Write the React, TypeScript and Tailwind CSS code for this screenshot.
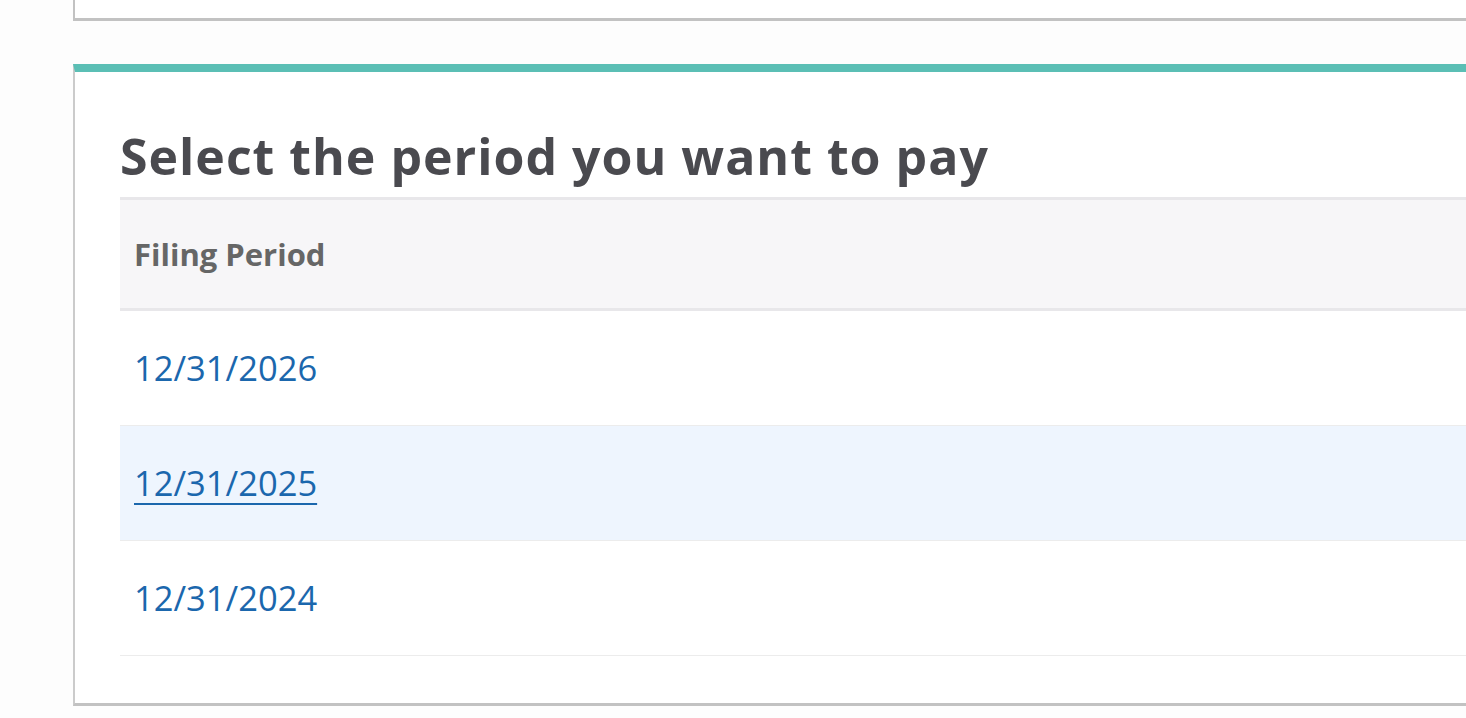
import React from "react";

const rows = ["12/31/2026", "12/31/2025", "12/31/2024"];

export default function App() {
  return (
    <div className="w-[1466px] h-[718px] overflow-hidden bg-[#fdfdfd]">
      {/* top card remainder */}
      <div className="ml-[73px] w-[1500px] h-[21px] bg-white border-l-2 border-b-[3px] border-[#c2c2c2]" />
      {/* main card */}
      <div className="mt-[43px] ml-[73px] w-[1500px] h-[642px] bg-white border-t-8 border-t-[#5bbfb5] border-l-2 border-b-[3px] border-l-[#cbcbcb] border-b-[#c2c2c2]">
        <div className="pl-[45px] pt-[52px]">
          <h1
            className="text-[#4a4a4f] text-[50px] font-bold leading-[64px] tracking-[1px]"
            style={{ fontFamily: "'Open Sans', 'Noto Sans', sans-serif" }}
          >
            Select the period you want to pay
          </h1>
          <div
            className="mt-[9px]"
            style={{ fontFamily: "'Open Sans', 'Noto Sans', sans-serif" }}
          >
            <div className="h-[114px] bg-[#f7f6f8] border-t-[3px] border-b-[3px] border-[#e8e7ea] flex items-center pl-[14px]">
              <span className="text-[#666666] text-[31px] font-bold">Filing Period</span>
            </div>
            {rows.map((d, i) => (
              <div
                key={d}
                className={
                  i === 1
                    ? "h-[115px] flex items-center pl-[14px] border-b border-[#ececec] bg-[#eef5fe]"
                    : "h-[115px] flex items-center pl-[14px] border-b border-[#ececec]"
                }
              >
                <span
                  className={
                    i === 1
                      ? "text-[#1b67ad] text-[34.5px] underline decoration-2 underline-offset-[7px]"
                      : "text-[#1b67ad] text-[34.5px]"
                  }
                >
                  {d}
                </span>
              </div>
            ))}
          </div>
        </div>
      </div>
    </div>
  );
}
